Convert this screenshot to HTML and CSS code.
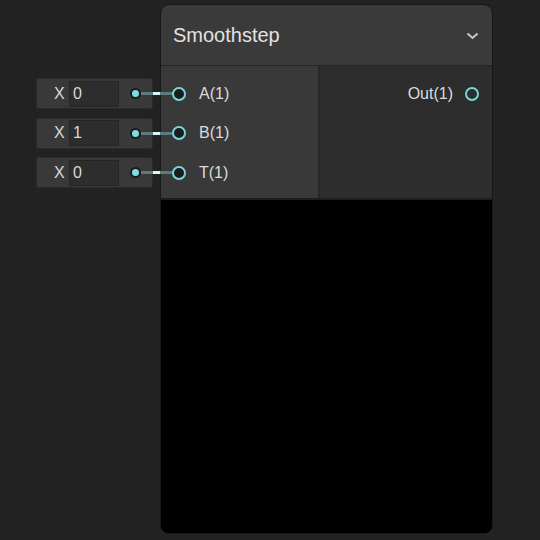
FILE: index.html
```html
<!DOCTYPE html>
<html>
<head>
<meta charset="utf-8">
<link rel="stylesheet" href="styles.css">
</head>
<body>
<div class="canvas">
  <div class="inputs">
    <div class="box"><span class="x-label">X</span><span class="field">0</span><span class="dot"></span><span class="wire"></span></div>
    <div class="box"><span class="x-label">X</span><span class="field">1</span><span class="dot"></span><span class="wire"></span></div>
    <div class="box"><span class="x-label">X</span><span class="field">0</span><span class="dot"></span><span class="wire"></span></div>
  </div>
  <div class="node">
    <div class="header">
      <span class="title">Smoothstep</span>
      <svg class="chevron" width="13" height="8" viewBox="0 0 13 8"><path d="M1.5 1.5 L6.5 6 L11.5 1.5" fill="none" stroke="#c8c8c8" stroke-width="2"/></svg>
    </div>
    <div class="body">
      <div class="col-in">
        <div class="in-row"><span class="port"></span><span class="label">A(1)</span></div>
        <div class="in-row"><span class="port"></span><span class="label">B(1)</span></div>
        <div class="in-row"><span class="port"></span><span class="label">T(1)</span></div>
      </div>
      <div class="col-out">
        <div class="out-row"><span class="label">Out(1)</span><span class="port port-out"></span></div>
      </div>
    </div>
    <div class="preview"></div>
  </div>
</div>
</body>
</html>
```
FILE: styles.css
```css
html, body {
  margin: 0;
  padding: 0;
}
body {
  width: 540px;
  height: 540px;
  overflow: hidden;
  background: #222222;
  font-family: "Liberation Sans", Arial, sans-serif;
  color: #dcdcdc;
}
.canvas {
  display: flex;
  align-items: flex-start;
  padding-left: 36px;
}
.inputs {
  width: 117px;
  padding-top: 78px;
  display: flex;
  flex-direction: column;
  gap: 8.5px;
}
.box {
  position: relative;
  box-sizing: border-box;
  width: 117px;
  height: 31px;
  display: flex;
  align-items: center;
  padding-left: 17px;
  background: #393939;
  border: 1px solid #2a2a2a;
  border-radius: 2px;
  font-size: 16px;
}
.x-label {
  width: 11px;
  margin-right: 4px;
  color: #dadada;
}
.field {
  box-sizing: border-box;
  width: 50px;
  height: 26px;
  line-height: 24px;
  padding-left: 3px;
  background: #2d2d2d;
  border: 1px solid #252525;
  color: #dadada;
}
.dot {
  box-sizing: border-box;
  width: 11px;
  height: 11px;
  margin-left: 11px;
  border-radius: 50%;
  background: #7fdde0;
  border: 2px solid #1b1b1b;
  position: relative;
  z-index: 3;
}
.wire {
  position: absolute;
  left: 104px;
  top: 50%;
  margin-top: -1.5px;
  width: 33px;
  height: 3px;
  z-index: 2;
  background: linear-gradient(to right, #5b7b7c 0, #5b7b7c 12px, #d8f6f6 12px, #d8f6f6 19px, #5b7b7c 19px, #5b7b7c 33px);
}
.node {
  box-sizing: border-box;
  width: 333px;
  height: 530px;
  margin-top: 4px;
  margin-left: 7px;
  border: 1px solid #181818;
  border-radius: 9px;
  overflow: hidden;
  background: #000;
  display: flex;
  flex-direction: column;
}
.header {
  height: 60px;
  flex: none;
  display: flex;
  align-items: center;
  justify-content: space-between;
  padding: 0 13px 0 12px;
  background: #3a3a3a;
  border-bottom: 1px solid #242424;
}
.title {
  font-size: 20px;
  color: #e2e2e2;
}
.chevron {
  display: block;
  margin-top: 2px;
}
.body {
  flex: none;
  height: 132px;
  display: flex;
  border-bottom: 2px solid #1e1e1e;
}
.col-in {
  width: 159px;
  box-sizing: border-box;
  padding-top: 8px;
  background: #393939;
  border-right: 2px solid #272727;
}
.col-out {
  flex: 1;
  padding-top: 8px;
  background: #2d2d2d;
}
.in-row, .out-row {
  height: 39.5px;
  display: flex;
  align-items: center;
  font-size: 16px;
}
.in-row {
  padding-left: 11px;
}
.in-row .label {
  margin-left: 13px;
}
.out-row {
  justify-content: flex-end;
  padding-right: 13px;
}
.out-row .label {
  margin-right: 12px;
}
.port {
  box-sizing: border-box;
  width: 14px;
  height: 14px;
  border-radius: 50%;
  border: 2px solid #72d8dc;
  background: #1c1c1c;
  position: relative;
  z-index: 3;
}
.port-out {
  background: #2d2d2d;
}
.preview {
  flex: 1;
  background: #000;
}
```
